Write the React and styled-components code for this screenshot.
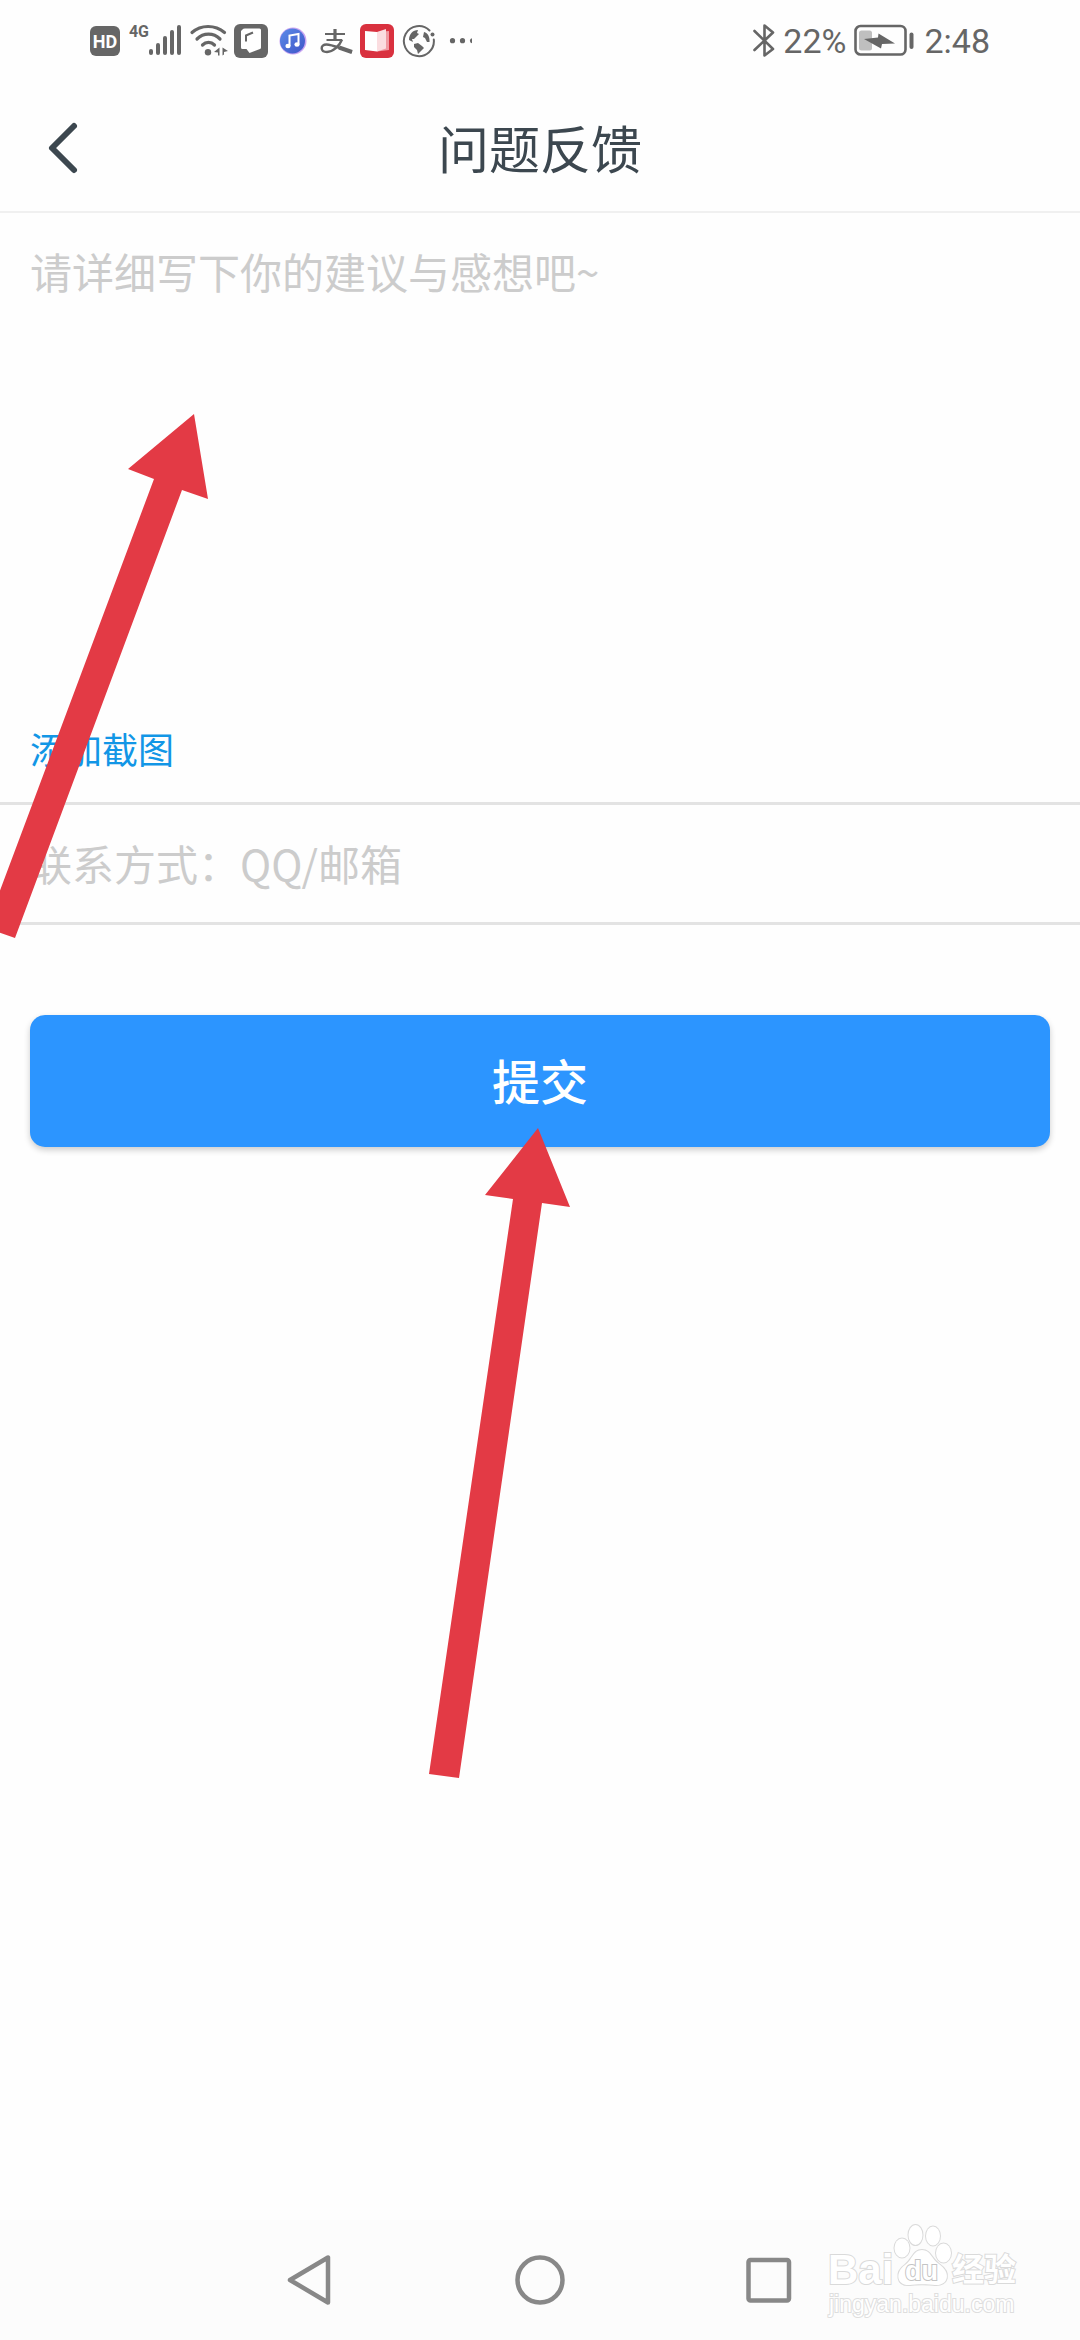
// src/App.jsx
import React, { useState } from "react";
import styled, { createGlobalStyle } from "styled-components";

const GlobalStyle = createGlobalStyle`
  * {
    box-sizing: border-box;
  }

  body {
    margin: 0;
    background-color: #fefefe;
    font-family: "Noto Sans CJK SC", "Noto Sans", sans-serif;
  }
`;

const Page = styled.div`
  position: relative;
  display: flex;
  flex-direction: column;
  min-height: 100vh;
  overflow: hidden;
`;

const StatusBar = styled.div`
  display: flex;
  justify-content: space-between;
  align-items: center;
  height: 82px;
  padding: 0 90px;
  color: #666;
`;

const StatusGroup = styled.div`
  display: flex;
  align-items: center;
  gap: ${(props) => props.$gap}px;

  svg {
    display: block;
    flex-shrink: 0;
  }
`;

const StatusText = styled.span`
  font-family: Roboto, sans-serif;
  font-size: 34px;
  line-height: 40px;
`;

const HdBadge = styled.span`
  width: 30px;
  height: 30px;
  border-radius: 6px;
  background-color: #666;
  color: #fff;
  font-family: Roboto, sans-serif;
  font-size: 18px;
  font-weight: 700;
  line-height: 31px;
  text-align: center;
`;

const Signal = styled.span`
  display: flex;
  justify-content: flex-end;
  align-items: flex-start;
  width: 56px;
`;

const NetworkType = styled.span`
  font-family: Roboto, sans-serif;
  font-size: 16px;
  font-weight: 700;
  line-height: 16px;
`;

const Header = styled.header`
  display: grid;
  grid-template-columns: 120px 1fr 120px;
  align-items: center;
  height: 131px;
  border-bottom: 2px solid #f0f0f0;
`;

const BackButton = styled.button`
  display: flex;
  align-items: center;
  height: 100px;
  padding: 2px 0 0 46px;
  border: none;
  background: none;
  cursor: pointer;
`;

const Title = styled.h1`
  margin: 0;
  color: #3c474f;
  font-size: 51px;
  font-weight: 400;
  line-height: 72px;
  text-align: center;
`;

const Form = styled.form`
  display: flex;
  flex-direction: column;
`;

const FeedbackBox = styled.div`
  display: flex;
  flex-direction: column;
  align-items: flex-start;
  padding: 28px 30px 24px;
  border-bottom: 3px solid #e3e3e3;
`;

const FeedbackInput = styled.textarea`
  width: 100%;
  height: 477px;
  padding: 0;
  border: none;
  outline: none;
  resize: none;
  background: none;
  color: #3c474f;
  font-family: inherit;
  font-size: 42px;
  line-height: 60px;

  &::placeholder {
    color: #ccc;
  }
`;

const AddScreenshot = styled.button`
  padding: 0;
  border: none;
  background: none;
  color: #1296e6;
  font-family: inherit;
  font-size: 36px;
  line-height: 60px;
  cursor: pointer;
`;

const ContactInput = styled.input`
  width: 100%;
  height: 120px;
  padding: 0 30px 2px;
  border: none;
  border-bottom: 3px solid #e3e3e3;
  outline: none;
  background: none;
  color: #3c474f;
  font-family: inherit;
  font-size: 42px;

  &::placeholder {
    color: #ccc;
  }
`;

const SubmitButton = styled.button`
  height: 132px;
  margin: 90px 30px 0;
  padding: 0 0 4px;
  border: none;
  border-radius: 15px;
  background-color: #2c95ff;
  box-shadow: 0 3px 6px rgba(0, 0, 0, 0.2);
  color: #fff;
  font-family: inherit;
  font-size: 48px;
  font-weight: 500;
  cursor: pointer;
`;

const NavBar = styled.nav`
  display: flex;
  justify-content: center;
  align-items: center;
  gap: 170px;
  height: 120px;
  margin-top: auto;
  background-color: #fcfcfc;
`;

const NavButton = styled.button`
  width: 60px;
  height: 60px;
  padding: 0;
  border: none;
  background: none;
  cursor: pointer;

  svg {
    display: block;
  }
`;

const Arrows = styled.svg`
  position: absolute;
  top: 0;
  left: 0;
  pointer-events: none;
`;

const Watermark = styled.svg`
  position: absolute;
  right: 50px;
  bottom: 16px;
  pointer-events: none;
`;

const SignalIcon = () => (
  <svg width="33" height="34" viewBox="0 0 33 34" fill="#666">
    <rect x="0" y="25" width="4" height="6" rx="2" />
    <rect x="7" y="19" width="4" height="12" rx="2" />
    <rect x="14" y="12" width="4" height="19" rx="2" />
    <rect x="21" y="6" width="4" height="25" rx="2" />
    <rect x="28" y="1" width="4" height="30" rx="2" />
  </svg>
);

const WifiIcon = () => (
  <svg width="40" height="34" viewBox="0 0 40 34">
    <g fill="none" stroke="#666" strokeWidth="3.2" strokeLinecap="round">
      <path d="M4 8.5C13 0.5 27 0.5 36.5 8.5" />
      <path d="M9 15C15.5 8.5 25.5 8.5 32 15" />
      <path d="M14.5 21C18 17.5 23 17.5 26.5 21" />
    </g>
    <g fill="#666">
      <circle cx="20" cy="28.3" r="3.2" />
      <path d="M26 28L31.500 23.500V31.500H30V28.500ZM40 27L34.500 23.500V31.500L36 30.500V28Z" />
    </g>
  </svg>
);

const NoteAppIcon = () => (
  <svg width="34" height="34" viewBox="0 0 34 34">
    <rect width="34" height="34" rx="6" fill="#666" />
    <path
      d="M8.5 5.5Q9 4.5 11 4.500H25.500Q27 4.500 27 6V23.500Q27 24.500 26 25L15.500 29L12.500 25H8.500Q7 25 7 23.500V7Z"
      fill="#fff"
    />
    <path d="M12 17.500V11.500L19 8.500" fill="none" stroke="#666" strokeWidth="2" />
  </svg>
);

const MusicIcon = () => (
  <svg width="38" height="34" viewBox="0 0 38 34">
    <defs>
      <linearGradient id="music" x1="0" y1="0" x2="1" y2="1">
        <stop offset="0" stopColor="#5b8be8" />
        <stop offset="1" stopColor="#3f55c8" />
      </linearGradient>
    </defs>
    <circle cx="19" cy="17" r="13.5" fill="#c9a5f2" />
    <circle cx="18.5" cy="17" r="12.5" fill="url(#music)" />
    <path d="M15.5 22V11.500L24.500 10V20.500" fill="none" stroke="#fff" strokeWidth="2" />
    <ellipse cx="14" cy="22" rx="2.6" ry="2.2" fill="#fff" />
    <ellipse cx="23" cy="20.5" rx="2.6" ry="2.2" fill="#fff" />
  </svg>
);

const AlipayIcon = () => (
  <svg width="36" height="34" viewBox="0 0 36 34" fill="none" stroke="#666">
    <path d="M7 10H27M8.500 16H24" strokeWidth="2" />
    <path d="M17 5V16" strokeWidth="3.2" />
    <path d="M24 15.500C21.500 22 15 28 9 28C2 28 2 20.500 8.500 20.500C14 20.500 22 24.500 34 28" strokeWidth="2.4" />
    <path d="M21 23.500L34 28" strokeWidth="4" />
  </svg>
);

const BookIcon = () => (
  <svg width="34" height="34" viewBox="0 0 34 34">
    <rect width="34" height="34" rx="6" fill="#d9313f" />
    <path d="M17 8L29 7V26L17 27.500Z" fill="#f09aa2" />
    <path d="M5 7L17 8V27.500L5 26Z" fill="#fff" />
    <path d="M17 8L26 5V24.500L17 27.500Z" fill="#fbdde0" />
  </svg>
);

const EarthIcon = () => (
  <svg width="39" height="34" viewBox="0 0 39 34">
    <path
      d="M29.5 6.5A15 15 0 1 0 33.8 15.5"
      fill="none"
      stroke="#666"
      strokeWidth="2"
      strokeLinecap="round"
    />
    <circle cx="32.5" cy="10.5" r="2" fill="#666" />
    <path
      d="M9 16C9 10 13 6 18 6L17 9L19 10L16 13L14 15L12 15L13 18ZM14 20L18 19L22 22L24 24L20 28L18 30L17 26L14 23ZM24 8C28 9 30 13 29.500 18L27 18L25 14L23 13Z"
      fill="#666"
    />
  </svg>
);

const MoreIcon = () => (
  <svg width="27" height="34" viewBox="0 0 27 34" fill="#666">
    <circle cx="7.5" cy="16.7" r="2.6" />
    <circle cx="17.5" cy="16.7" r="2.6" />
    <circle cx="27.5" cy="16.7" r="2.6" />
  </svg>
);

const BluetoothIcon = () => (
  <svg width="22" height="34" viewBox="0 0 22 34">
    <path
      d="M1.5 7L20 25L11.500 31.500V1.500L20 8.500L1.500 26"
      fill="none"
      stroke="#666"
      strokeWidth="2.6"
      strokeLinecap="round"
      strokeLinejoin="round"
    />
  </svg>
);

const BatteryIcon = () => (
  <svg width="62" height="34" viewBox="0 0 62 34">
    <rect x="1.5" y="2" width="50" height="28.5" rx="5" fill="none" stroke="#666" strokeWidth="2.6" />
    <rect x="5" y="6.5" width="13" height="20" rx="2.5" fill="#bfbfbf" />
    <rect x="55.5" y="8.5" width="4" height="16.5" rx="2" fill="#666" />
    <path d="M10 15L24 13.500L24.500 9.500L41 19.500L28 20L27 24.500Z" fill="#666" />
  </svg>
);

const BaiduMark = () => (
  <Watermark width="206" height="104" viewBox="0 0 206 104" role="img" aria-label="Baidu">
    <g fill="#fff" stroke="#dadada" strokeWidth="2" paintOrder="stroke" fontWeight="700">
      <text x="4" y="64" fontFamily="Liberation Sans" fontSize="42">Bai</text>
      <ellipse cx="78" cy="28" rx="7.5" ry="9.5" />
      <ellipse cx="91.5" cy="15" rx="7" ry="10" />
      <ellipse cx="109" cy="16" rx="7" ry="9.5" />
      <ellipse cx="119.5" cy="33" rx="7.5" ry="9.5" />
      <path d="M98 30C107 30 107 39 115 44C128 53 124 66 111 65C105 64 91 64 86 65C72 66 71 52 81 45C89 39 89 30 98 30Z" />
      <text x="81" y="60" fontFamily="Liberation Sans" fontSize="27" stroke="#c4c4c4">du</text>
      <text x="128" y="61" fontFamily="Noto Sans CJK SC" fontSize="32">经验</text>
    </g>
    <text
      x="5"
      y="92"
      fill="#fff"
      stroke="#dedede"
      strokeWidth="2"
      paintOrder="stroke"
      fontFamily="Liberation Sans"
      fontSize="23"
    >
      jingyan.baidu.com
    </text>
  </Watermark>
);

const App = () => {
  const [content, setContent] = useState("");
  const [contact, setContact] = useState("");

  const handleSubmit = (e) => {
    e.preventDefault();
    setContent("");
    setContact("");
  };

  return (
    <Page>
      <GlobalStyle />
      <StatusBar>
        <StatusGroup $gap={6}>
          <HdBadge>HD</HdBadge>
          <Signal>
            <NetworkType>4G</NetworkType>
            <SignalIcon />
          </Signal>
          <WifiIcon />
          <NoteAppIcon />
          <MusicIcon />
          <AlipayIcon />
          <BookIcon />
          <EarthIcon />
          <MoreIcon />
        </StatusGroup>
        <StatusGroup $gap={8}>
          <BluetoothIcon />
          <StatusText>22%</StatusText>
          <BatteryIcon />
          <StatusText>2:48</StatusText>
        </StatusGroup>
      </StatusBar>

      <Header>
        <BackButton type="button" aria-label="返回">
          <svg width="34" height="54" viewBox="0 0 34 54">
            <path
              d="M28 5L6 27L28 49"
              fill="none"
              stroke="#3c474f"
              strokeWidth="6"
              strokeLinecap="round"
              strokeLinejoin="round"
            />
          </svg>
        </BackButton>
        <Title>问题反馈</Title>
      </Header>

      <Form onSubmit={handleSubmit}>
        <FeedbackBox>
          <FeedbackInput
            aria-label="建议与感想"
            placeholder="请详细写下你的建议与感想吧~"
            value={content}
            onChange={(e) => setContent(e.target.value)}
          />
          <AddScreenshot type="button">添加截图</AddScreenshot>
        </FeedbackBox>
        <ContactInput
          type="text"
          aria-label="联系方式"
          placeholder="联系方式：QQ/邮箱"
          value={contact}
          onChange={(e) => setContact(e.target.value)}
        />
        <SubmitButton type="submit">提交</SubmitButton>
      </Form>

      <NavBar>
        <NavButton type="button" aria-label="后退">
          <svg width="60" height="60" viewBox="0 0 60 60" fill="none" stroke="#888" strokeWidth="4.5" strokeLinejoin="round">
            <path d="M48 7.500V52.500L10 30Z" />
          </svg>
        </NavButton>
        <NavButton type="button" aria-label="主页">
          <svg width="60" height="60" viewBox="0 0 60 60" fill="none" stroke="#888" strokeWidth="4.5">
            <circle cx="30" cy="30" r="22.5" />
          </svg>
        </NavButton>
        <NavButton type="button" aria-label="最近任务">
          <svg width="60" height="60" viewBox="0 0 60 60" fill="none" stroke="#888" strokeWidth="4.5">
            <rect x="8.5" y="10" width="40.5" height="40.5" rx="2" />
          </svg>
        </NavButton>
      </NavBar>

      <Arrows width="600" height="1800" viewBox="0 0 600 1800" fill="#e33a45" aria-hidden="true">
        <polygon points="194,414 128,469 154,479 -14,928 15,938 182,490 208,499" />
        <polygon points="538,1128 485,1195 513,1199 429,1774 459,1778 542,1203 570,1207" />
      </Arrows>
      <BaiduMark />
    </Page>
  );
};

export default App;
